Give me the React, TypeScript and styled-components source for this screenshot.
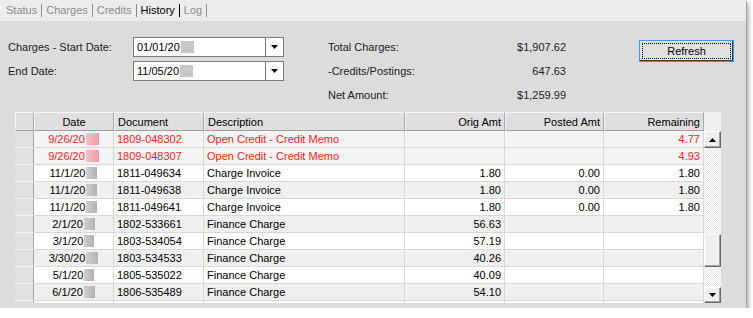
import styled, { createGlobalStyle } from 'styled-components';

const GlobalStyle = createGlobalStyle`
	body {
		margin: 0;
		background: #ffffff;
		font-family: 'Liberation Sans', Arial, sans-serif;
		font-size: 11px;
	}
`;

const Window = styled.div`
	width: 746px;
	height: 308px;
	background: #dcdcdc;
	box-shadow: 1px 1px 0 #a0a0a0, 3px 3px 4px rgba(0, 0, 0, 0.3);
	display: flex;
	flex-direction: column;
	overflow: hidden;
`;

const TabStrip = styled.div`
	height: 21px;
	background: #ececec;
	display: flex;
	align-items: center;
	padding-left: 2px;
`;

const Tab = styled.div<{ $active?: boolean }>`
	padding: 0 4px;
	line-height: 13px;
	font-size: 11px;
	color: ${(p) => (p.$active ? '#000000' : '#8c8c8c')};
	border-right: 1px solid ${(p) => (p.$active ? '#000000' : '#8c8c8c')};
`;

const TopSection = styled.div`
	height: 91px;
	box-sizing: border-box;
	padding: 14px 0 0 8px;
	display: flex;
	align-items: flex-start;
`;

const DateFields = styled.div`
	display: grid;
	grid-template-columns: 125px 151px;
	grid-auto-rows: 20px;
	row-gap: 4px;
	margin-top: 2px;
	align-items: center;
`;

const Label = styled.div`
	color: #222222;
`;

const Combo = styled.div`
	height: 20px;
	box-sizing: border-box;
	border: 1px solid #7a7a7a;
	background: #ffffff;
	display: flex;
	align-items: center;
`;

const ComboText = styled.div`
	flex: 1;
	padding-left: 3px;
	color: #000000;
	display: flex;
	align-items: center;
`;

const ComboButton = styled.div`
	width: 17px;
	height: 100%;
	border-left: 1px solid #7a7a7a;
	display: flex;
	align-items: center;
	justify-content: center;
`;

const Redact = styled.span<{ $w: number; $tone: 'grey' | 'pink' | 'light' }>`
	display: inline-block;
	width: ${(p) => p.$w}px;
	height: 12px;
	margin-left: 1px;
	background: ${(p) =>
		p.$tone === 'pink'
			? 'linear-gradient(to right, #f8c4ca, #f39aa4)'
			: p.$tone === 'light'
			? '#c9c5c9'
			: 'linear-gradient(to right, #cfcfcf, #b2b2b2)'};
`;

const Summary = styled.div`
	margin-left: 44px;
	width: 238px;
	display: grid;
	grid-template-columns: 1fr auto;
	grid-auto-rows: 24px;
	align-items: center;
	color: #222222;
`;

const Value = styled.div`
	text-align: right;
`;

const RefreshButton = styled.button`
	margin: 5px 0 0 73px;
	width: 95px;
	height: 22px;
	box-sizing: border-box;
	background: #e1e1e1;
	border: 1px solid #3399ff;
	box-shadow: inset -1px -1px 0 #3a3a3a;
	outline: 1px dotted #000000;
	outline-offset: -4px;
	font-family: 'Liberation Sans', Arial, sans-serif;
	font-size: 11px;
	color: #000000;
	padding: 0;
`;

const GridWrap = styled.div`
	margin-left: 15px;
	width: 706px;
	height: 191px;
	display: flex;
	background: #f0f0f0;
`;

const Table = styled.div`
	width: 689px;
	height: 191px;
	overflow: hidden;
`;

const COLS = '19px 80px 90px 201px 100px 99px 100px';

const HeaderRow = styled.div`
	display: grid;
	grid-template-columns: ${COLS};
	height: 19px;
`;

const HeaderCell = styled.div<{ $align: string }>`
	box-sizing: border-box;
	background: #dfdfdf;
	border-top: 1px solid #f4f4f4;
	border-left: 1px solid #f4f4f4;
	border-right: 1px solid #a8a8a8;
	border-bottom: 1px solid #a0a0a0;
	padding: 0 3px;
	display: flex;
	align-items: center;
	justify-content: ${(p) => p.$align};
	color: #000000;
	white-space: nowrap;
`;

const DataRow = styled.div<{ $shade: boolean; $red?: boolean }>`
	display: grid;
	grid-template-columns: ${COLS};
	height: 17px;
	background: ${(p) => (p.$red ? '#f4f4f4' : p.$shade ? '#efefef' : '#ffffff')};
	color: ${(p) => (p.$red ? '#ff1a1a' : '#000000')};
`;

const RowHead = styled.div`
	box-sizing: border-box;
	background: #e0e0e0;
	border-bottom: 1px solid #f2f2f2;
	border-right: 1px solid #a8a8a8;
`;

const Cell = styled.div<{ $align: string }>`
	box-sizing: border-box;
	border-right: 1px solid #d8d8d8;
	border-bottom: 1px solid #d8d8d8;
	padding: 0 3px;
	display: flex;
	align-items: center;
	justify-content: ${(p) => p.$align};
	white-space: nowrap;
	overflow: hidden;
`;

const ScrollColumn = styled.div`
	width: 17px;
	display: flex;
	flex-direction: column;
`;

const ScrollHeader = styled.div`
	height: 19px;
	background: #f0f0f0;
`;

const ScrollTrack = styled.div`
	height: 172px;
	display: flex;
	flex-direction: column;
	background-color: #ffffff;
	background-image: repeating-conic-gradient(#e6e6e6 0 25%, #ffffff 0 50%);
	background-size: 2px 2px;
`;

const ScrollPart = styled.div<{ $h: number }>`
	height: ${(p) => p.$h}px;
	box-sizing: border-box;
	background: #f0f0f0;
	border-top: 1px solid #ffffff;
	border-left: 1px solid #ffffff;
	border-right: 1px solid #696969;
	border-bottom: 1px solid #696969;
	box-shadow: inset -1px -1px 0 #a0a0a0;
	display: flex;
	align-items: center;
	justify-content: center;
`;

const Thumb = styled(ScrollPart)`
	margin-top: 86px;
`;

const DownPart = styled(ScrollPart)`
	margin-top: auto;
`;

const Arrow = ({ up }: { up?: boolean }) => (
	<svg width="7" height="4" viewBox="0 0 7 4">
		<polygon points={up ? '3.5,0 7,4 0,4' : '0,0 7,0 3.5,4'} fill="#000000" />
	</svg>
);

type Row = {
	date: string;
	w: number;
	doc: string;
	desc: string;
	orig?: string;
	posted?: string;
	rem?: string;
	red?: boolean;
	shade: boolean;
};

const rows: Row[] = [
	{ date: '9/26/20', w: 13, doc: '1809-048302', desc: 'Open Credit - Credit Memo', rem: '4.77', red: true, shade: true },
	{ date: '9/26/20', w: 13, doc: '1809-048307', desc: 'Open Credit - Credit Memo', rem: '4.93', red: true, shade: true },
	{ date: '11/1/20', w: 11, doc: '1811-049634', desc: 'Charge Invoice', orig: '1.80', posted: '0.00', rem: '1.80', shade: false },
	{ date: '11/1/20', w: 11, doc: '1811-049638', desc: 'Charge Invoice', orig: '1.80', posted: '0.00', rem: '1.80', shade: true },
	{ date: '11/1/20', w: 11, doc: '1811-049641', desc: 'Charge Invoice', orig: '1.80', posted: '0.00', rem: '1.80', shade: false },
	{ date: '2/1/20', w: 11, doc: '1802-533661', desc: 'Finance Charge', orig: '56.63', shade: true },
	{ date: '3/1/20', w: 10, doc: '1803-534054', desc: 'Finance Charge', orig: '57.19', shade: false },
	{ date: '3/30/20', w: 12, doc: '1803-534533', desc: 'Finance Charge', orig: '40.26', shade: true },
	{ date: '5/1/20', w: 10, doc: '1805-535022', desc: 'Finance Charge', orig: '40.09', shade: false },
	{ date: '6/1/20', w: 11, doc: '1806-535489', desc: 'Finance Charge', orig: '54.10', shade: true },
];

const headers: [string, string][] = [
	['', 'center'],
	['Date', 'center'],
	['Document', 'flex-start'],
	['Description', 'flex-start'],
	['Orig Amt', 'flex-end'],
	['Posted Amt', 'flex-end'],
	['Remaining', 'flex-end'],
];

export default function App() {
	return (
		<>
			<GlobalStyle />
			<Window>
				<TabStrip>
					<Tab>Status</Tab>
					<Tab>Charges</Tab>
					<Tab>Credits</Tab>
					<Tab $active>History</Tab>
					<Tab>Log</Tab>
				</TabStrip>
				<TopSection>
					<DateFields>
						<Label>Charges - Start Date:</Label>
						<Combo>
							<ComboText>
								01/01/20
								<Redact $w={13} $tone="light" />
							</ComboText>
							<ComboButton>
								<Arrow />
							</ComboButton>
						</Combo>
						<Label>End Date:</Label>
						<Combo>
							<ComboText>
								11/05/20
								<Redact $w={13} $tone="light" />
							</ComboText>
							<ComboButton>
								<Arrow />
							</ComboButton>
						</Combo>
					</DateFields>
					<Summary>
						<div>Total Charges:</div>
						<Value>$1,907.62</Value>
						<div>-Credits/Postings:</div>
						<Value>647.63</Value>
						<div>Net Amount:</div>
						<Value>$1,259.99</Value>
					</Summary>
					<RefreshButton>Refresh</RefreshButton>
				</TopSection>
				<GridWrap>
					<Table>
						<HeaderRow>
							{headers.map(([h, a], i) => (
								<HeaderCell key={i} $align={a}>
									{h}
								</HeaderCell>
							))}
						</HeaderRow>
						{rows.map((r, i) => (
							<DataRow key={i} $shade={r.shade} $red={r.red}>
								<RowHead />
								<Cell $align="center">
									{r.date}
									<Redact $w={r.w} $tone={r.red ? 'pink' : 'grey'} />
								</Cell>
								<Cell $align="flex-start">{r.doc}</Cell>
								<Cell $align="flex-start">{r.desc}</Cell>
								<Cell $align="flex-end">{r.orig}</Cell>
								<Cell $align="flex-end">{r.posted}</Cell>
								<Cell $align="flex-end">{r.rem}</Cell>
							</DataRow>
						))}
						<DataRow $shade={false}>
							<RowHead />
							<Cell $align="center" />
							<Cell $align="center" />
							<Cell $align="center" />
							<Cell $align="center" />
							<Cell $align="center" />
							<Cell $align="center" />
						</DataRow>
					</Table>
					<ScrollColumn>
						<ScrollHeader />
						<ScrollTrack>
							<ScrollPart $h={17}>
								<Arrow up />
							</ScrollPart>
							<Thumb $h={33} />
							<DownPart $h={16}>
								<Arrow />
							</DownPart>
						</ScrollTrack>
					</ScrollColumn>
				</GridWrap>
			</Window>
		</>
	);
}
